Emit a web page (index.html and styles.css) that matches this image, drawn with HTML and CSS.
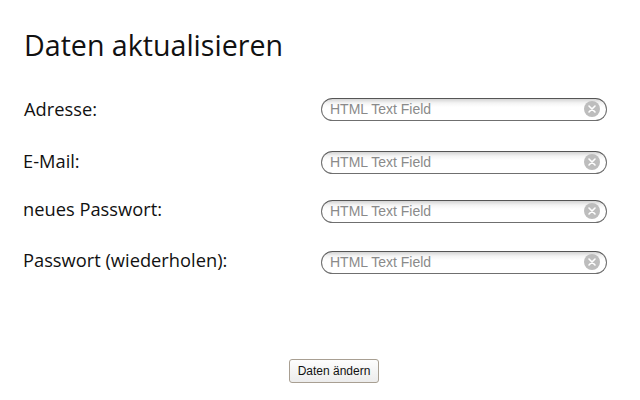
FILE: index.html
```html
<!DOCTYPE html>
<html lang="de">
<head>
<meta charset="utf-8">
<link rel="stylesheet" href="styles.css">
</head>
<body>
<div class="page">
  <h1 class="title">Daten aktualisieren</h1>
  <form class="form">
    <div class="row row-1">
      <label class="label label-a">Adresse:</label>
      <div class="field"><span class="ph">HTML Text Field</span><span class="clear"><svg width="16" height="16" viewBox="0 0 16 16"><circle cx="8" cy="8" r="8" fill="#bdbdbd"/><path d="M5 5L11 11M11 5L5 11" stroke="#fff" stroke-width="1.6" stroke-linecap="round"/></svg></span></div>
    </div>
    <div class="row row-2">
      <label class="label">E-Mail:</label>
      <div class="field"><span class="ph">HTML Text Field</span><span class="clear"><svg width="16" height="16" viewBox="0 0 16 16"><circle cx="8" cy="8" r="8" fill="#bdbdbd"/><path d="M5 5L11 11M11 5L5 11" stroke="#fff" stroke-width="1.6" stroke-linecap="round"/></svg></span></div>
    </div>
    <div class="row row-3">
      <label class="label">neues Passwort:</label>
      <div class="field"><span class="ph">HTML Text Field</span><span class="clear"><svg width="16" height="16" viewBox="0 0 16 16"><circle cx="8" cy="8" r="8" fill="#bdbdbd"/><path d="M5 5L11 11M11 5L5 11" stroke="#fff" stroke-width="1.6" stroke-linecap="round"/></svg></span></div>
    </div>
    <div class="row row-4">
      <label class="label">Passwort (wiederholen):</label>
      <div class="field"><span class="ph">HTML Text Field</span><span class="clear"><svg width="16" height="16" viewBox="0 0 16 16"><circle cx="8" cy="8" r="8" fill="#bdbdbd"/><path d="M5 5L11 11M11 5L5 11" stroke="#fff" stroke-width="1.6" stroke-linecap="round"/></svg></span></div>
    </div>
    <div class="actions">
      <button type="button" class="btn">Daten ändern</button>
    </div>
  </form>
</div>
</body>
</html>
```
FILE: styles.css
```css
html, body {
  margin: 0;
  padding: 0;
  background: #fff;
}
.page {
  width: 640px;
  height: 400px;
  padding: 0 33px 0 23px;
  box-sizing: border-box;
  font-family: "Open Sans", sans-serif;
  color: #111;
}
.title {
  margin: 0;
  padding-top: 26px;
  font-size: 28.6px;
  font-weight: 400;
  line-height: 38px;
  padding-left: 1px;
}
.form {
  display: flex;
  flex-direction: column;
}
.row {
  display: flex;
  align-items: center;
  justify-content: space-between;
  height: 24px;
}
.row-1 { margin-top: 33px; }
.row-2 { margin-top: 29px; }
.row-3 { margin-top: 25px; }
.row-4 { margin-top: 27px; }
.label {
  font-size: 18.3px;
  line-height: 24px;
}
.label-a { padding-left: 1px; }
.row-2 .label { margin-top: -3px; }
.row-3 .label, .row-4 .label { margin-top: -4px; }
.field {
  width: 286px;
  height: 23px;
  box-sizing: border-box;
  border: 1px solid #6f6f6f;
  border-top-color: #555;
  border-radius: 12px;
  background: linear-gradient(#d4d4d4 0, #f4f4f4 4px, #fff 8px);
  display: flex;
  align-items: center;
  justify-content: space-between;
  padding: 0 6px 0 8px;
}
.ph {
  font-family: "Liberation Sans", Arial, sans-serif;
  font-size: 14px;
  color: #8a8a8a;
}
.clear {
  display: flex;
  width: 16px;
  height: 16px;
}
.actions {
  display: flex;
  justify-content: center;
  margin-top: 85px;
  padding-left: 38px;
}
.btn {
  font-family: "Liberation Sans", Arial, sans-serif;
  font-size: 12px;
  color: #111;
  height: 24px;
  padding: 0 8px;
  border: 1px solid #a89f92;
  border-radius: 3px;
  background: linear-gradient(#fdfdfd, #ececec);
}
```
